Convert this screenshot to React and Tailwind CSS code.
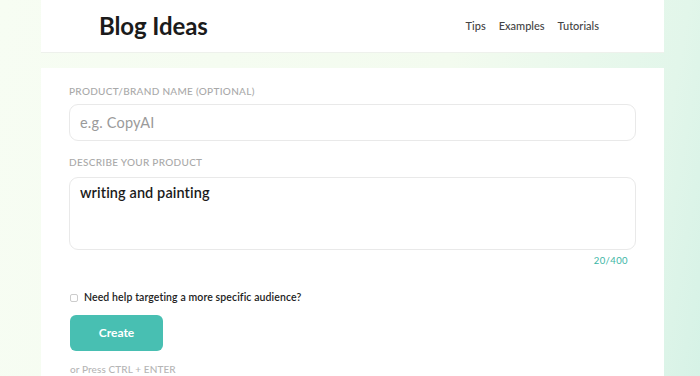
export default function App() {
  return (
    <div
      className="w-[700px] h-[376px] overflow-hidden bg-[linear-gradient(100deg,#f7fdf3_0%,#f3fbef_60%,#e2f6ea_90%,#d6f2e6_100%)]"
      style={{ fontFamily: "Lato, 'Open Sans', sans-serif" }}
    >
      <div className="ml-[41px] w-[623px] flex flex-col">
        <header className="h-[53px] bg-white border-b border-[#eef1ec] flex items-center pl-[58px] pr-[65px]">
          <h1 className="text-[24px] font-bold text-[#1b1b1b] tracking-[-0.1px] leading-none">Blog Ideas</h1>
          <nav className="ml-auto flex gap-[13px] text-[11px] text-[#444] font-medium">
            <span>Tips</span>
            <span>Examples</span>
            <span>Tutorials</span>
          </nav>
        </header>
        <main className="mt-[15px] bg-white h-[320px] pl-[28px] pr-[28px] pt-[16px]">
          <label className="block text-[10px] uppercase text-[#a9a9a9] tracking-[0.3px] font-medium">
            Product/Brand name (optional)
          </label>
          <div className="mt-[5px] h-[37px] rounded-[9px] border border-[#e9e9e9] flex items-center px-[10px] text-[14.5px] text-[#9a9a9a] tracking-[0.2px]">
            e.g. CopyAI
          </div>
          <label className="block mt-[14px] text-[10px] uppercase text-[#a9a9a9] tracking-[0.3px] font-medium">
            Describe your product
          </label>
          <div className="mt-[7px] h-[73px] rounded-[9px] border border-[#e9e9e9] px-[10px] pt-[4px] text-[14.5px] font-semibold text-[#1b1b1b] tracking-[0.1px]">
            writing and painting
          </div>
          <div className="flex justify-end pr-[8px] mt-[4px] text-[9.5px] text-[#3bb5a5] tracking-[0.4px]">20/400</div>
          <div className="mt-[22px] flex items-center gap-[6px] pl-[1px]">
            <span className="w-[8px] h-[8px] border border-[#ccc] rounded-[2px] bg-white" />
            <span className="text-[10.5px] font-semibold text-[#222] tracking-[0.1px]">Need help targeting a more specific audience?</span>
          </div>
          <button className="mt-[9px] ml-[1px] w-[93px] h-[36px] rounded-[6px] bg-[#48bfb2] text-white text-[12px] font-bold">
            Create
          </button>
          <div className="mt-[11px] ml-[1px] text-[10px] text-[#b5b5b5] font-medium tracking-[0.1px]">or Press CTRL + ENTER</div>
        </main>
      </div>
    </div>
  );
}
